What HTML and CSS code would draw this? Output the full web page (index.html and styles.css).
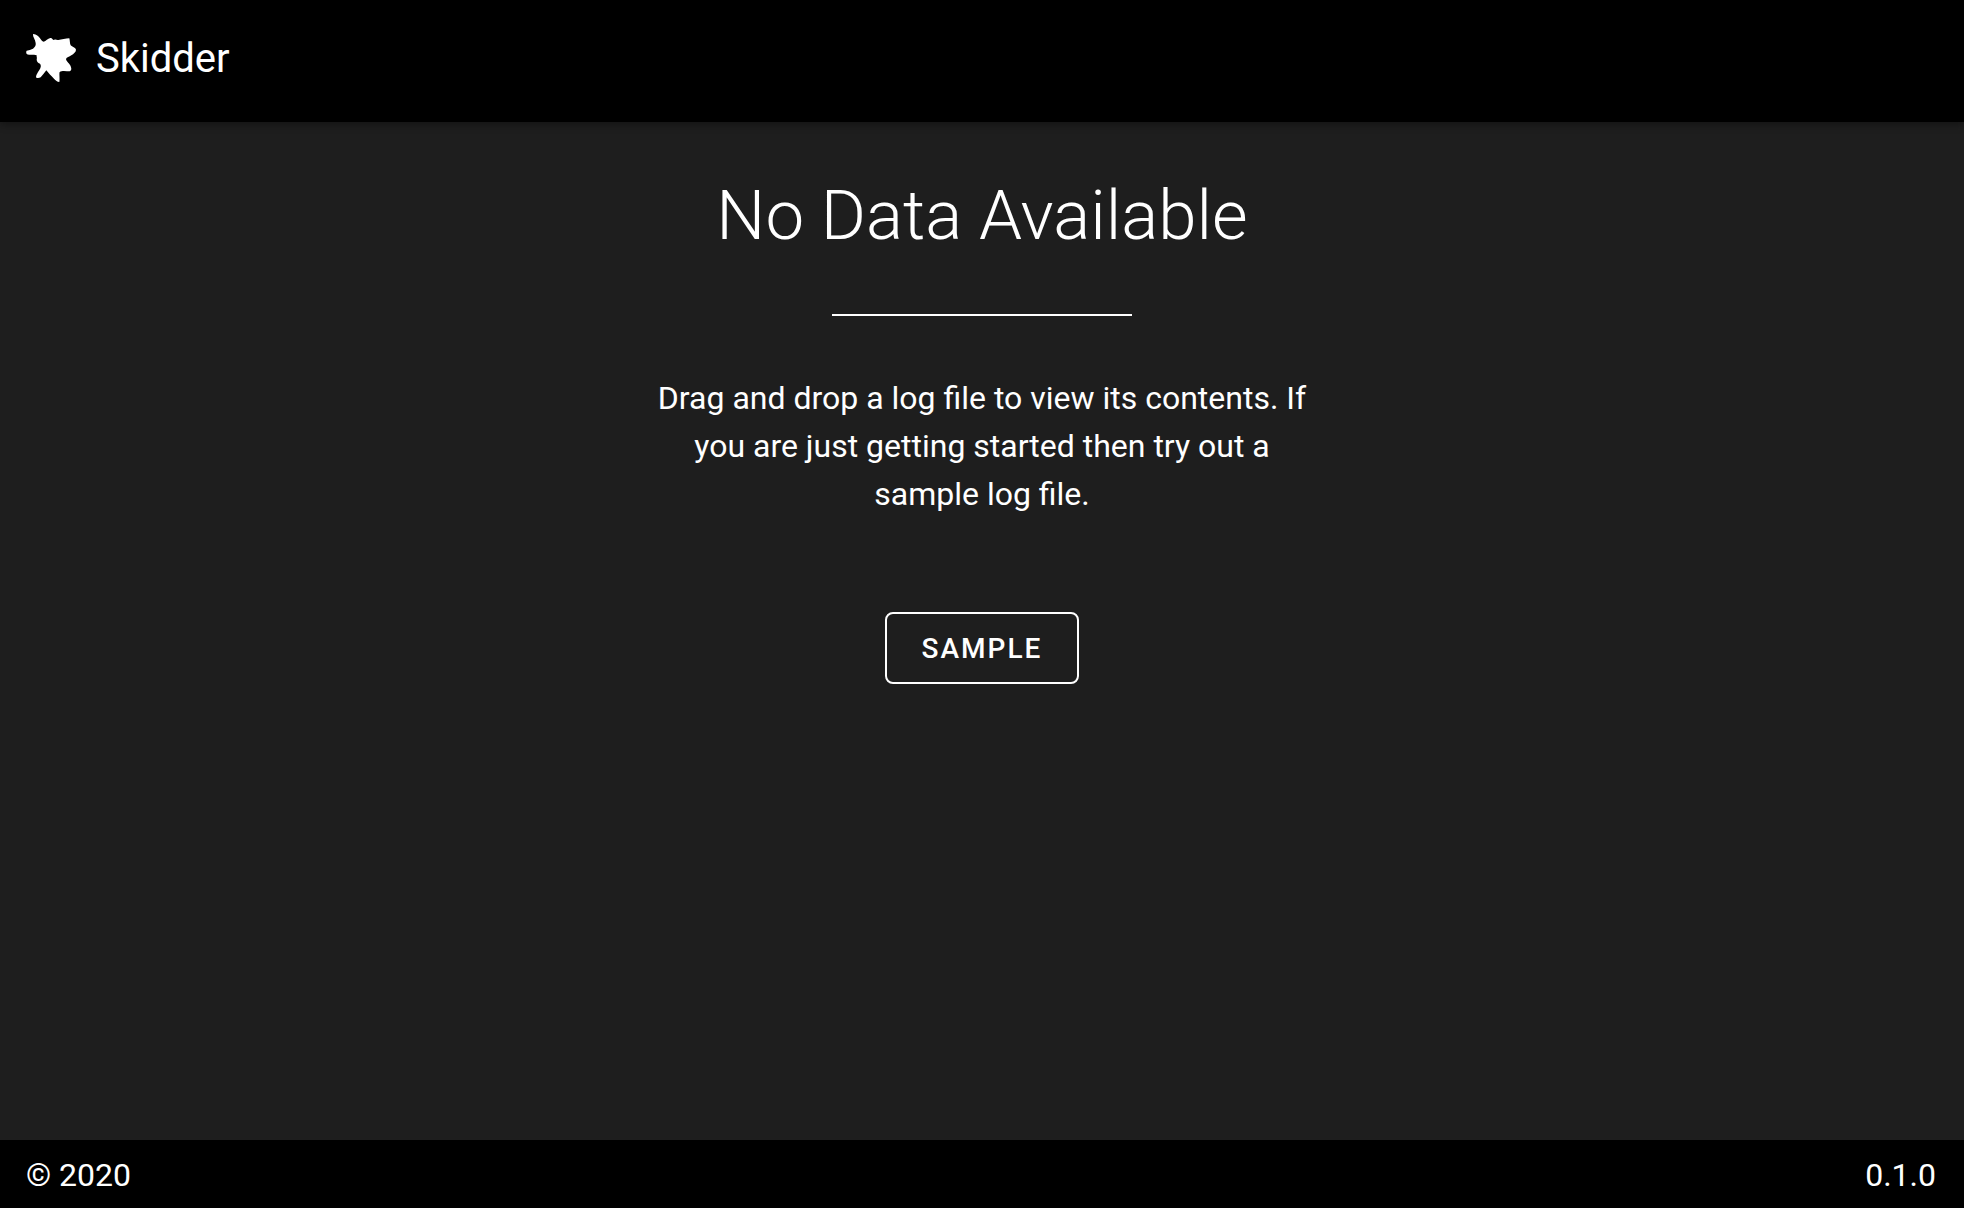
FILE: index.html
```html
<!DOCTYPE html>
<html lang="en">
<head>
<meta charset="utf-8">
<meta name="viewport" content="width=device-width, initial-scale=1">
<title>Skidder</title>
<link rel="stylesheet" href="styles.css">
</head>
<body>
<header class="app-bar">
  <svg class="logo" viewBox="30 30 150 144" aria-hidden="true">
    <path d="M52 30C61 31 68 37 72 43C76 49 78 52 83 53C90 52 95 43 103 42C109 41 109 48 114 48C119 45 122 49 127 48C137 46 149 44 160 43C162 50 161 58 164 64C168 69 179 71 180 77C180 84 173 89 166 94C160 98 152 100 150 105C151 113 162 119 164 127C167 134 167 140 161 142C152 142 138 139 131 144C129 149 132 164 130 174C124 174 119 169 114 164C106 156 97 147 91 139C86 146 80 153 74 160C70 162 65 163 61 161C58 156 65 146 70 138C75 130 76 124 72 119C65 117 62 112 62 106C64 102 61 98 62 94C52 91 40 94 33 91C30 88 30 83 32 80C38 79 45 77 51 74C58 69 60 63 59 57C58 47 50 39 51 31Z"/>
  </svg>
  <span class="app-title">Skidder</span>
</header>
<main class="content">
  <h1 class="heading">No Data Available</h1>
  <hr class="divider">
  <p class="message">Drag and drop a log file to view its contents. If you are just getting started then try out a sample log file.</p>
  <button class="button" type="button">SAMPLE</button>
</main>
<footer class="footer">
  <span>© 2020</span>
  <span>0.1.0</span>
</footer>
</body>
</html>
```
FILE: styles.css
```css
* {
  box-sizing: border-box;
}

body {
  display: flex;
  flex-direction: column;
  min-height: 100vh;
  margin: 0;
  background: #1e1e1e;
  color: #fff;
  font: 32px/48px Roboto, sans-serif;
}

.app-bar {
  display: flex;
  align-items: flex-start;
  gap: 20px;
  padding: 34px 26px 28px;
  background: #000;
  box-shadow: 0 2px 8px rgba(0, 0, 0, 0.4);
}

.logo {
  width: 50px;
  height: 48px;
  fill: #fff;
}

.app-title {
  font-size: 40px;
  line-height: 50px;
  height: 60px;
}

.content {
  display: flex;
  flex: 1;
  flex-direction: column;
  align-items: center;
  padding: 50px 24px;
  text-align: center;
}

.heading {
  margin: 0;
  font-size: 69px;
  font-weight: 300;
  line-height: 88px;
}

.divider {
  width: 300px;
  height: 2px;
  margin: 54px 0 58px;
  border: 0;
  background: #fff;
}

.message {
  max-width: 660px;
  margin: 0 0 94px;
}

.button {
  height: 72px;
  padding: 2px 35px 0;
  border: 2px solid #fff;
  border-radius: 8px;
  background: transparent;
  color: #fff;
  font: 500 28px/32px Roboto, sans-serif;
  letter-spacing: 2px;
}

.footer {
  display: flex;
  justify-content: space-between;
  padding: 11px 28px 9px 26px;
  background: #000;
}
```
